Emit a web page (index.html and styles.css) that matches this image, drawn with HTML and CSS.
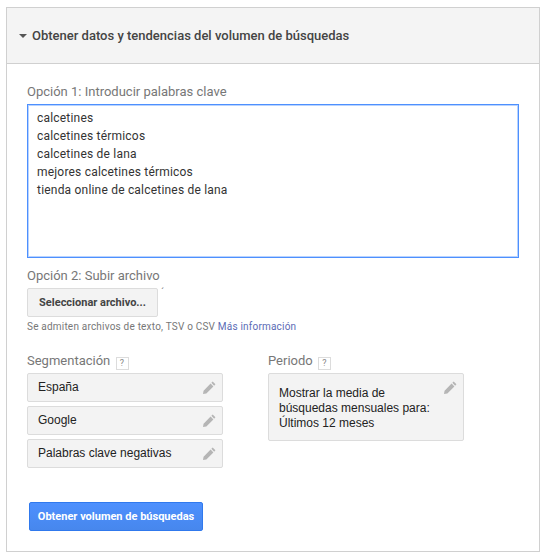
FILE: index.html
```html
<!DOCTYPE html>
<html lang="es">
<head>
    <meta charset="UTF-8">
    <meta name="viewport" content="width=device-width, initial-scale=1.0">
    <title>Obtener datos y tendencias</title>
    <link rel="stylesheet" href="styles.css">
</head>
<body>
    <div class="panel">
        <!-- Cabecera -->
        <div class="panel-header">
            <span class="caret"></span>
            <h1>Obtener datos y tendencias del volumen de búsquedas</h1>
        </div>

        <div class="panel-body">
            <!-- Opcion 1 -->
            <label class="field-label" for="keywords">Opción 1: Introducir palabras clave</label>
            <textarea class="keywords" id="keywords">calcetines
calcetines térmicos
calcetines de lana
mejores calcetines térmicos
tienda online de calcetines de lana</textarea>

            <!-- Opcion 2 -->
            <div class="field-label upload-label">Opción 2: Subir archivo</div>
            <div class="upload-row">
                <button type="button" class="file-btn">Seleccionar archivo...</button>
                <span class="tick">´</span>
            </div>
            <p class="hint">Se admiten archivos de texto, TSV o CSV <a href="#">Más información</a></p>

            <div class="columns">
                <div class="col-target">
                    <div class="field-label col-title">Segmentación <span class="help">?</span></div>
                    <div class="option-box">
                        <span>España</span>
                        <svg class="pencil" viewBox="0 0 14 14"><path d="M10.4 0.6 13.4 3.6 12 5 9 2ZM8.2 2.8 11.2 5.8 3.6 13.4 0 14 0.6 10.4Z"/></svg>
                    </div>
                    <div class="option-box">
                        <span>Google</span>
                        <svg class="pencil" viewBox="0 0 14 14"><path d="M10.4 0.6 13.4 3.6 12 5 9 2ZM8.2 2.8 11.2 5.8 3.6 13.4 0 14 0.6 10.4Z"/></svg>
                    </div>
                    <div class="option-box">
                        <span>Palabras clave negativas</span>
                        <svg class="pencil" viewBox="0 0 14 14"><path d="M10.4 0.6 13.4 3.6 12 5 9 2ZM8.2 2.8 11.2 5.8 3.6 13.4 0 14 0.6 10.4Z"/></svg>
                    </div>
                </div>
                <div class="col-period">
                    <div class="field-label col-title">Periodo <span class="help">?</span></div>
                    <div class="option-box period-box">
                        <span>Mostrar la media de búsquedas mensuales para: Últimos 12 meses</span>
                        <svg class="pencil" viewBox="0 0 14 14"><path d="M10.4 0.6 13.4 3.6 12 5 9 2ZM8.2 2.8 11.2 5.8 3.6 13.4 0 14 0.6 10.4Z"/></svg>
                    </div>
                </div>
            </div>

            <button type="button" class="submit-btn">Obtener volumen de búsquedas</button>
        </div>
    </div>
</body>
</html>
```

FILE: styles.css
```css
* {
    margin: 0;
    padding: 0;
    box-sizing: border-box;
}

body {
    font-family: Roboto, Arial, sans-serif;
    background-color: white;
    padding: 7px 7px 7px 6px;
}

.panel {
    width: 534px;
    height: 545px;
    border: 1px solid #d0d0d0;
}

.panel-header {
    height: 56px;
    background-color: #f4f4f4;
    border-bottom: 1px solid #d0d0d0;
    display: flex;
    align-items: center;
    padding-left: 12px;
}

.caret {
    width: 0;
    height: 0;
    border: 4px solid transparent;
    border-top: 4px solid #555;
    border-bottom: 0;
    margin-right: 5px;
}

h1 {
    font-size: 13px;
    font-weight: 500;
    color: #444;
}

.panel-body {
    padding: 20px 20px 0 20px;
}

.field-label {
    display: block;
    font-size: 13px;
    line-height: 16px;
    color: #777;
}

.keywords {
    display: block;
    width: 492px;
    height: 154px;
    margin-top: 4px;
    padding: 4px 9px;
    border: 1px solid #4d90fe;
    box-shadow: inset 0 0 0 1px rgba(77, 144, 254, 0.4);
    outline: none;
    resize: none;
    overflow: hidden;
    font-family: Roboto, Arial, sans-serif;
    font-size: 12px;
    letter-spacing: 0.2px;
    line-height: 18px;
    color: #333;
}

.upload-label {
    margin-top: 10px;
}

.upload-row {
    display: flex;
    margin-top: 4px;
}

.file-btn {
    width: 131px;
    height: 29px;
    background-color: #f3f3f3;
    border: 1px solid #dcdcdc;
    border-radius: 2px;
    font-family: Roboto, Arial, sans-serif;
    font-size: 11px;
    font-weight: 700;
    color: #444;
}

.tick {
    font-size: 10px;
    line-height: 10px;
    color: #777;
    margin-left: 3px;
}

.hint {
    font-size: 10px;
    line-height: 12px;
    color: #777;
    margin-top: 4px;
    letter-spacing: 0.2px;
}

.hint a {
    color: #5b6bb5;
    text-decoration: none;
}

.columns {
    display: flex;
    margin-top: 20px;
}

.col-target {
    width: 241px;
}

.col-title {
    margin-bottom: 3px;
}

.help {
    display: inline-flex;
    align-items: center;
    justify-content: center;
    width: 13px;
    height: 13px;
    margin-left: 2px;
    border: 1px solid #dcdcdc;
    font-size: 9px;
    color: #888;
    vertical-align: -1px;
}

.option-box {
    width: 196px;
    height: 29px;
    margin-bottom: 4px;
    padding: 0 6px 0 10px;
    background-color: #f3f3f3;
    border: 1px solid #dcdcdc;
    border-radius: 2px;
    display: flex;
    align-items: center;
    justify-content: space-between;
    font-family: "Liberation Sans", Arial, sans-serif;
    font-size: 12px;
    color: #222;
}

.period-box {
    height: 68px;
    line-height: 15px;
    align-items: flex-start;
    padding-top: 12px;
}

.period-box span {
    width: 165px;
}

.period-box .pencil {
    margin-top: -5px;
}

.pencil {
    width: 13px;
    height: 13px;
    fill: #b5b5b5;
    flex-shrink: 0;
}

.submit-btn {
    display: block;
    width: 174px;
    height: 29px;
    margin: 30px 0 0 2px;
    background: linear-gradient(#4d90fe, #4787ed);
    border: 1px solid #3079ed;
    border-radius: 2px;
    font-family: Roboto, Arial, sans-serif;
    font-size: 11px;
    font-weight: 700;
    color: white;
}
```
